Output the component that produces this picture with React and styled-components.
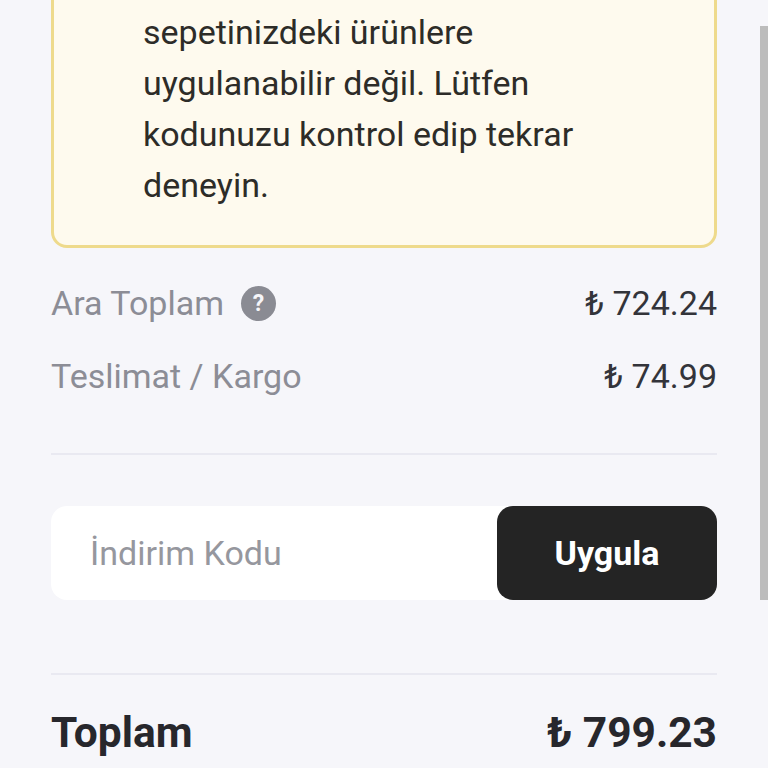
import React from 'react';
import styled, { createGlobalStyle } from 'styled-components';

const GlobalStyle = createGlobalStyle`
  html, body {
    margin: 0;
    padding: 0;
    height: 768px;
    overflow: hidden;
    background: #f6f6fa;
    font-family: Roboto, "Liberation Sans", sans-serif;
  }
`;

const App = () => (
  <Page>
    <GlobalStyle />
    <Summary>
      <Notice>
        <NoticeText>
          Bu indirim kodu şu an için,
          <br />
          sepetinizdeki ürünlere
          <br />
          uygulanabilir değil. Lütfen
          <br />
          kodunuzu kontrol edip tekrar
          <br />
          deneyin.
        </NoticeText>
      </Notice>
      <Row $first>
        <Label>
          Ara Toplam
          <HelpBadge>?</HelpBadge>
        </Label>
        <Amount>₺ 724.24</Amount>
      </Row>
      <Row>
        <Label>Teslimat / Kargo</Label>
        <Amount>₺ 74.99</Amount>
      </Row>
      <Divider $top={57} />
      <CouponForm>
        <CouponInput placeholder="İndirim Kodu" />
        <ApplyButton>Uygula</ApplyButton>
      </CouponForm>
      <Divider $top={73} />
      <TotalRow>
        <span>Toplam</span>
        <span>₺ 799.23</span>
      </TotalRow>
    </Summary>
    <Scrollbar />
  </Page>
);
export default App;

const Page = styled.div`
  position: relative;
  width: 768px;
  height: 768px;
  overflow: hidden;
  background: #f6f6fa;
`;
const Summary = styled.div`
  width: 666px;
  margin-left: 51px;
  margin-top: -60px;
`;
const Notice = styled.div`
  box-sizing: border-box;
  height: 308px;
  padding: 13px 20px 0 89px;
  background: #fefaee;
  border: 3px solid #eeda8c;
  border-radius: 16px;
`;
const NoticeText = styled.p`
  margin: 0;
  font-size: 34px;
  line-height: 51px;
  color: #2d2c28;
`;
const Row = styled.div`
  display: flex;
  justify-content: space-between;
  align-items: center;
  height: 40px;
  margin-top: ${(p) => (p.$first ? '35px' : '33px')};
`;
const Label = styled.div`
  display: flex;
  align-items: center;
  font-size: 34px;
  color: #8c8d96;
`;
const HelpBadge = styled.span`
  display: flex;
  align-items: center;
  justify-content: center;
  width: 35px;
  height: 35px;
  margin-left: 17px;
  border-radius: 50%;
  background: #8a8b93;
  color: #f6f6fa;
  font-size: 23px;
  font-weight: 700;
`;
const Amount = styled.div`
  font-size: 34px;
  color: #33343a;
`;
const Divider = styled.div`
  height: 2px;
  margin-top: ${(p) => p.$top}px;
  background: #e9e9f1;
`;
const CouponForm = styled.div`
  display: flex;
  height: 94px;
  margin-top: 51px;
  background: #fff;
  border-radius: 16px;
`;
const CouponInput = styled.input`
  flex: 1;
  min-width: 0;
  padding: 0 0 0 39px;
  border: 0;
  outline: none;
  background: transparent;
  font-family: inherit;
  font-size: 34px;
  color: #33343a;
  &::placeholder {
    color: #96979e;
    opacity: 1;
  }
`;
const ApplyButton = styled.button`
  width: 220px;
  border: 0;
  border-radius: 16px;
  background: #242424;
  color: #fff;
  font-family: inherit;
  font-size: 34px;
  font-weight: 700;
`;
const TotalRow = styled.div`
  display: flex;
  justify-content: space-between;
  align-items: center;
  height: 50px;
  margin-top: 32px;
  font-size: 42.5px;
  font-weight: 700;
  color: #27272c;
`;
const Scrollbar = styled.div`
  position: absolute;
  top: 26px;
  right: 0;
  width: 8px;
  height: 574px;
  background: #bcbcbc;
`;
